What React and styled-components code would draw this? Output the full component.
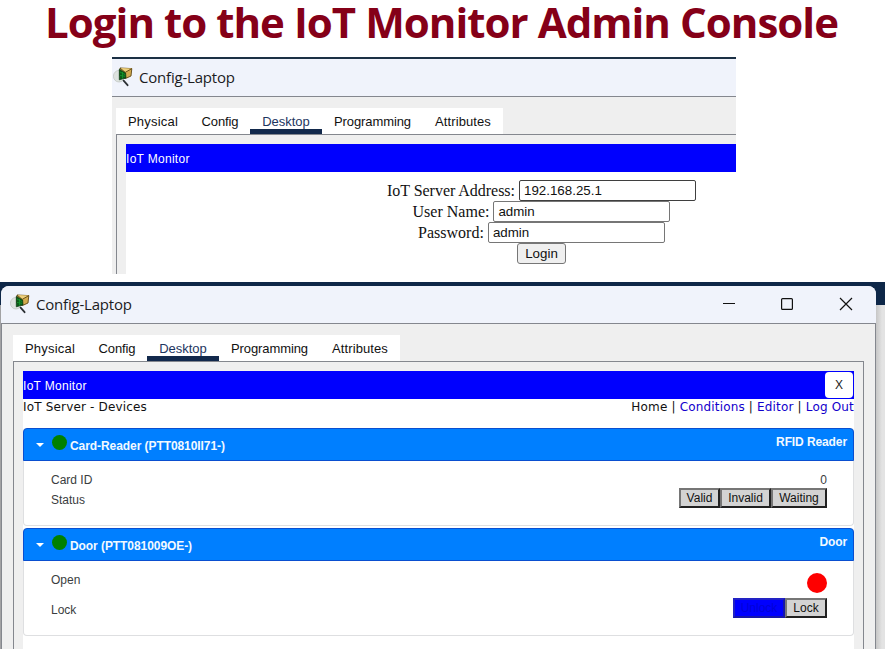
import React from "react";
import styled, { createGlobalStyle, css } from "styled-components";

const GlobalStyle = createGlobalStyle`
  * { box-sizing: border-box; }
  body { margin: 0; background: #fff; overflow: hidden; }
  button, input { margin: 0; font-family: inherit; }
`;

const Page = styled.main`
  width: 885px;
  height: 649px;
  display: flex;
  flex-direction: column;
  background: #fff;
  color: #111;
  font-family: "Liberation Sans", Arial, sans-serif;
`;

const Heading = styled.h1`
  margin: 0;
  height: 57px;
  flex: none;
  padding-left: 45px;
  color: #850018;
  font: bold 42px/44px "Open Sans", sans-serif;
  letter-spacing: -0.97px;
  white-space: nowrap;
`;

const LoginShot = styled.section`
  width: 624px;
  height: 217px;
  flex: none;
  margin-left: 112px;
  overflow: hidden;
  display: flex;
  flex-direction: column;
  background: #efefef;
  border-top: 2px solid #1b3044;
`;

const Desktop = styled.section`
  margin-top: 8px;
  height: 367px;
  flex: none;
  display: flex;
  padding: 4px 9px 0 1px;
  background: linear-gradient(#0e2748 0 23px, transparent 23px),
    linear-gradient(90deg, #a2a2a4 0 1px, transparent 1px 876px, #c6c6c6 876px, #e3e3e3 882px);
`;

const Window = styled.div`
  flex: 1;
  min-width: 0;
  overflow: hidden;
  display: flex;
  flex-direction: column;
  background: #efefef;
  border-radius: 8px 8px 0 0;
`;

const TitleBar = styled.header`
  height: ${(p) => p.$height}px;
  flex: none;
  display: flex;
  align-items: center;
  gap: 6px;
  padding: 0 0 2px ${(p) => p.$inset}px;
  background: #f0f3fb;
  border-bottom: 1px solid #84878e;
`;

const WindowName = styled.span`
  flex: 1;
  color: #1c1c1e;
  font: 15px/20px "Open Sans", "Segoe UI", sans-serif;
  letter-spacing: -0.2px;
`;

const WindowControls = styled.div`
  display: flex;
  align-items: center;
  gap: 39px;
  padding-right: 20px;
`;

const WindowFrame = styled.div`
  flex: 1;
  display: flex;
  flex-direction: column;
  padding: 11px 11px 0;
  border: solid #84878e;
  border-width: 0 1px;
`;

const LoginFrame = styled.div`
  flex: 1;
  display: flex;
  flex-direction: column;
  padding: 11px 0 0 4px;
`;

const TabStrip = styled.nav`
  display: flex;
  width: max-content;
  height: 26px;
  background: #fff;
`;

const Tab = styled.span`
  width: ${(p) => p.$width}px;
  font-size: 13px;
  line-height: 27px;
  letter-spacing: ${(p) => p.$tracking || 0}px;
  text-align: center;
  ${(p) =>
    p.$active &&
    css`
      color: #1d3560;
      box-shadow: inset 0 -5px #12294c;
    `}
`;

const Pane = styled.div`
  flex: 1;
  display: flex;
  flex-direction: column;
  padding: 9px ${(p) => (p.$open ? 0 : 9)}px 0 9px;
  border: 1px solid #84878e;
  border-bottom: 0;
  ${(p) => p.$open && "border-right: 0;"}
`;

const AppBar = styled.div`
  height: 28px;
  flex: none;
  display: flex;
  align-items: center;
  justify-content: space-between;
  padding-right: 1px;
  background: #0000fe;
  color: #fff;
  font-size: 12px;
  letter-spacing: 0.3px;
`;

const AppName = styled.span`
  padding-top: 2px;
`;

const CloseButton = styled.button`
  width: 28px;
  height: 26px;
  padding: 0;
  border: 0;
  border-radius: 4px;
  background: #fff;
  color: #222;
  font-size: 12px;
`;

const Content = styled.div`
  flex: 1;
  background: #fff;
`;

const LoginForm = styled.form`
  width: 831px;
  padding-top: 8px;
  display: flex;
  flex-direction: column;
  align-items: center;
`;

const FieldRow = styled.label`
  height: 21px;
  display: flex;
  align-items: center;
  gap: 4px;
  font: 16px/21px "Liberation Serif", "Times New Roman", serif;
  letter-spacing: ${(p) => p.$tracking || 0}px;
`;

const Field = styled.input`
  width: 177px;
  height: 21px;
  padding: 1px 4px;
  border: 1px solid ${(p) => (p.$dark ? "#3f3f3f" : "#767676")};
  border-radius: 2px;
  background: #fff;
  color: #111;
  font: 13.33px "Liberation Sans", Arial, sans-serif;
`;

const LoginButton = styled.button`
  width: 49px;
  height: 21px;
  padding: 0;
  border: 1px solid #767676;
  border-radius: 3px;
  background: #efefef;
  color: #111;
  font-size: 13.33px;
`;

const SiteNav = styled.div`
  height: 29px;
  display: flex;
  justify-content: space-between;
  font: 12px/16px "DejaVu Sans", Verdana, sans-serif;
  letter-spacing: 0.17px;
  white-space: pre;
`;

const Link = styled.span`
  color: #1200cc;
`;

const Device = styled.article`
  height: ${(p) => p.$height}px;
  margin-bottom: 2px;
  border: 1px solid #dedfe1;
  border-top: 0;
  border-radius: 4px;
  color: #3a3d40;
  font-size: 12px;
`;

const DeviceHeader = styled.header`
  height: 33px;
  margin: 0 -1px;
  padding: 0 6px 0 12px;
  display: flex;
  align-items: center;
  background: #007fff;
  border: 1px solid #0a4fd0;
  border-radius: 4px 4px 0 0;
  color: #f2f9ff;
  font-weight: bold;
`;

const Caret = styled.i`
  border: 4px solid transparent;
  border-top-color: #fff;
  border-bottom: 0;
`;

const Lamp = styled.i`
  width: ${(p) => p.$size}px;
  height: ${(p) => p.$size}px;
  margin-top: ${(p) => p.$drop || 0}px;
  border-radius: 50%;
  background: ${(p) => p.$color};
`;

const HeaderLamp = styled(Lamp)`
  margin: 0 3px 4px 8px;
`;

const DeviceName = styled.span`
  flex: 1;
  padding-top: 2px;
  letter-spacing: -0.07px;
`;

const DeviceType = styled.span`
  padding-bottom: 6px;
  letter-spacing: -0.1px;
`;

const Properties = styled.div`
  padding: ${(p) => p.$top}px 26px 0 27px;
`;

const Property = styled.div`
  height: ${(p) => p.$height}px;
  display: flex;
  justify-content: space-between;
  align-items: center;
`;

const Choices = styled.div`
  display: flex;
  margin-top: ${(p) => p.$shift || 0}px;
`;

const Choice = styled.button`
  width: ${(p) => p.$width}px;
  height: 20px;
  padding: 0;
  border: 2px solid;
  border-color: ${(p) => (p.$on ? "#2222c4 #1616a8 #1616a8 #2222c4" : "#767676 #212121 #212121 #767676")};
  background: ${(p) => (p.$on ? "#0000fe" : "#d3d3d3")};
  color: ${(p) => (p.$on ? "#0000d8" : "#111")};
  font-size: 12px;
  line-height: 15px;
`;

const Icon = styled.svg`
  display: block;
  flex: none;
`;

function PacketIcon() {
  return (
    <Icon width="20" height="20" viewBox="0 0 20 20">
      <ellipse cx="6" cy="9.2" rx="5.6" ry="5.8" fill="#dde2df" stroke="#bcc1bc" strokeWidth=".7" />
      <path d="M7 1 18.8 1.6 18 9 12.5 11.5 7 9Z" fill="#d3ab4e" stroke="#5d4512" strokeWidth=".9" />
      <path d="m7 1 5.2 4.4L18.8 1.6" fill="#edcf7b" stroke="#5d4512" strokeWidth=".9" />
      <path d="M6.3 2.4 12.6 6 13 11 6.3 12.8Z" fill="#0b5a19" stroke="#083810" strokeWidth=".7" />
      <path d="m7 5 5 2.5M7 8.4l5 .9M9.5 5v6.5" stroke="#16a02c" strokeWidth=".7" />
      <path d="m10.6 13.6 4 4.6" stroke="#2c3034" strokeWidth="1.8" strokeLinecap="round" />
    </Icon>
  );
}

const tabs = [
  { name: "Physical", width: 74, tracking: 0.2 },
  { name: "Config", width: 60, tracking: -0.1 },
  { name: "Desktop", width: 72 },
  { name: "Programming", width: 101, tracking: -0.1 },
  { name: "Attributes", width: 80, tracking: 0.1 },
];

function Tabs() {
  return (
    <TabStrip>
      {tabs.map((t) => (
        <Tab key={t.name} $width={t.width} $tracking={t.tracking} $active={t.name === "Desktop"}>
          {t.name}
        </Tab>
      ))}
    </TabStrip>
  );
}

function DeviceTitle({ name, type }) {
  return (
    <DeviceHeader>
      <Caret />
      <HeaderLamp $size={15} $color="#008000" />
      <DeviceName>{name}</DeviceName>
      <DeviceType>{type}</DeviceType>
    </DeviceHeader>
  );
}

export default function App() {
  return (
    <Page>
      <GlobalStyle />
      <Heading>Login to the IoT Monitor Admin Console</Heading>
      <LoginShot>
        <TitleBar $height={38} $inset={1}>
          <PacketIcon />
          <WindowName>Config-Laptop</WindowName>
        </TitleBar>
        <LoginFrame>
          <Tabs />
          <Pane $open>
            <AppBar>
              <AppName>IoT Monitor</AppName>
            </AppBar>
            <Content>
              <LoginForm>
                <FieldRow $tracking={-0.03}>
                  IoT Server Address:
                  <Field $dark defaultValue="192.168.25.1" />
                </FieldRow>
                <FieldRow>
                  User Name:
                  <Field defaultValue="admin" />
                </FieldRow>
                <FieldRow>
                  Password:
                  <Field defaultValue="admin" />
                </FieldRow>
                <LoginButton type="button">Login</LoginButton>
              </LoginForm>
            </Content>
          </Pane>
        </LoginFrame>
      </LoginShot>
      <Desktop>
        <Window>
          <TitleBar $height={38} $inset={9}>
            <PacketIcon />
            <WindowName>Config-Laptop</WindowName>
            <WindowControls>
              <Icon width="20" height="20" viewBox="0 0 20 20">
                <path d="M5 9.5h12" stroke="#111" />
              </Icon>
              <Icon width="20" height="20" viewBox="0 0 20 20">
                <rect x="4.6" y="4.6" width="10.8" height="10.8" rx="1" fill="none" stroke="#111" strokeWidth="1.2" />
              </Icon>
              <Icon width="20" height="20" viewBox="0 0 20 20">
                <path d="m4 4 12 12M16 4 4 16" stroke="#111" strokeWidth="1.2" />
              </Icon>
            </WindowControls>
          </TitleBar>
          <WindowFrame>
            <Tabs />
            <Pane>
              <AppBar>
                <AppName>IoT Monitor</AppName>
                <CloseButton>X</CloseButton>
              </AppBar>
              <Content>
                <SiteNav>
                  <span>IoT Server - Devices</span>
                  <span>
                    Home | <Link>Conditions</Link> | <Link>Editor</Link> | <Link>Log Out</Link>
                  </span>
                </SiteNav>
                <Device $height={98}>
                  <DeviceTitle name="Card-Reader (PTT0810II71-)" type="RFID Reader" />
                  <Properties $top={9}>
                    <Property $height={20}>
                      <span>Card ID</span>
                      <span>0</span>
                    </Property>
                    <Property $height={20}>
                      <span>Status</span>
                      <Choices $shift={-4}>
                        <Choice $width={41}>Valid</Choice>
                        <Choice $width={51}>Invalid</Choice>
                        <Choice $width={56}>Waiting</Choice>
                      </Choices>
                    </Property>
                  </Properties>
                </Device>
                <Device $height={108}>
                  <DeviceTitle name="Door (PTT081009OE-)" type="Door" />
                  <Properties $top={4}>
                    <Property $height={30}>
                      <span>Open</span>
                      <Lamp $size={20} $drop={6} $color="#fe0000" />
                    </Property>
                    <Property $height={30}>
                      <span>Lock</span>
                      <Choices $shift={-4}>
                        <Choice $on $width={52}>Unlock</Choice>
                        <Choice $width={42}>Lock</Choice>
                      </Choices>
                    </Property>
                  </Properties>
                </Device>
              </Content>
            </Pane>
          </WindowFrame>
        </Window>
      </Desktop>
    </Page>
  );
}
